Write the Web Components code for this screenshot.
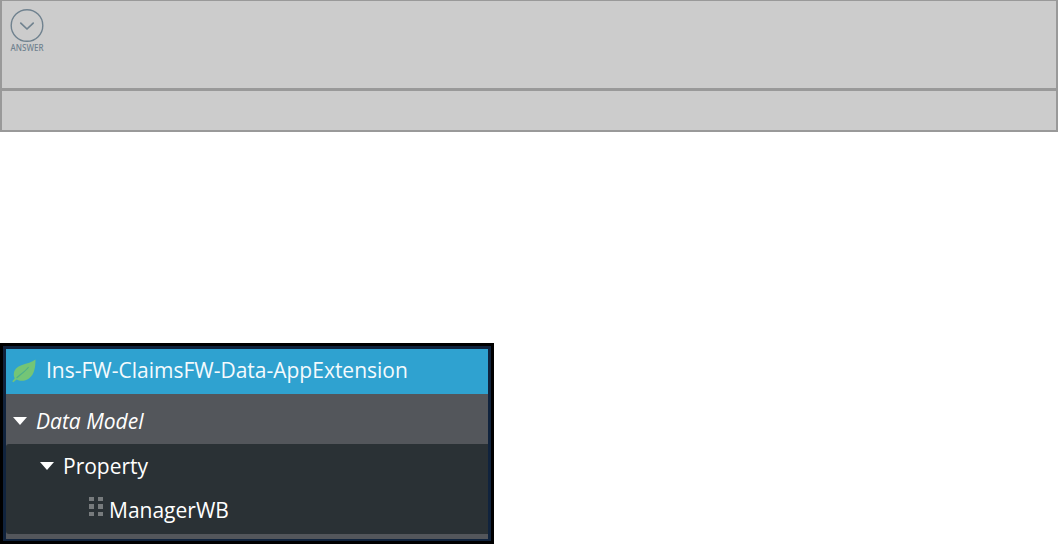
<!DOCTYPE html>
<html lang="en">
<head>
<meta charset="utf-8">
<title>Application explorer</title>
<style>
  body { margin: 0; background: #fff; font-family: "Open Sans", "Noto Sans", sans-serif; }
</style>
</head>
<body>
<app-page></app-page>

<script>
const define = (name, html) => {
  const template = document.createElement('template');
  template.innerHTML = html;
  customElements.define(name, class extends HTMLElement {
    constructor() {
      super();
      this.attachShadow({ mode: 'open' }).append(template.content.cloneNode(true));
    }
  });
};

define('answer-button', `
  <style>
    :host { display: block; }
    button { display: flex; flex-direction: column; align-items: center; padding: 0; border: 0;
      background: none; color: #70828f; font: 500 8px/12px "Noto Sans", sans-serif; }
    svg { display: block; }
  </style>
  <button type="button">
    <svg width="34" height="34" viewBox="0 0 34 34" fill="none" stroke="currentColor" stroke-width="1.4" aria-hidden="true">
      <circle cx="17" cy="17.500" r="15.8"/>
      <path d="M10.800 15.200l6.200 5.800 6.200-5.800" stroke-width="1.7" stroke-linecap="round" stroke-linejoin="round"/>
    </svg>
    <span><slot></slot></span>
  </button>`);

define('answer-box', `
  <style>
    :host { display: block; border: 2px solid #999; border-top-width: 1px; background: #ccc; }
    .main { display: flex; min-height: 80px; padding: 7px 0 0 8px; border-bottom: 3px solid #999; }
    .foot { height: 39px; }
  </style>
  <div class="main"><slot></slot></div>
  <div class="foot"></div>`);

define('leaf-icon', `
  <style>:host { display: block; } svg { display: block; }</style>
  <svg width="24" height="24" viewBox="0 0 24 24" aria-hidden="true">
    <path fill="#74c576" d="M23.5 0.5C20 3 15 4.500 10 6C5 7.500 2 11 1.800 15C1.700 16.800 2 18 2.700 19.200C1.800 20.500 1 21.300 0.500 22C0.300 23 1.200 23.500 2 22.800L4.500 20.600C8 22.300 13 22.500 17 19.500C22.500 15.500 23.500 8 23.500 0.500Z"/>
    <path fill="none" stroke="#4db08a" stroke-width="1.2" stroke-linecap="round" d="M5 18.500C8 15.800 13 12.500 16.200 8.500"/>
  </svg>`);

define('drag-handle', `
  <style>:host { display: block; } svg { display: block; }</style>
  <svg width="14" height="20" viewBox="0 0 14 20" fill="#777b7d" aria-hidden="true">
    <path d="M0 0h5v4H0zM9 0h5v4H9zM0 7h5v5H0zM9 7h5v5H9zM0 15h5v4H0zM9 15h5v4H9z"/>
  </svg>`);

define('tree-toggle', `
  <style>
    :host { display: block; }
    button { display: flex; align-items: center; gap: 9px; padding: 0; border: 0; background: none;
      color: inherit; font: inherit; line-height: inherit; white-space: nowrap; }
    svg { display: block; }
  </style>
  <button type="button" aria-expanded="true">
    <svg width="14" height="8" viewBox="0 0 14 8" fill="#fff" aria-hidden="true"><path d="M0 0h14L7 8z"/></svg>
    <slot></slot>
  </button>`);

define('class-panel', `
  <style>
    :host { display: block; box-sizing: border-box; max-width: 494px; padding: 3px; background: #000;
      color: #fff; font-size: 21px; line-height: 28px; }
    .frame { border: 3px solid #10233d; border-bottom-width: 2px; background: #53565b; padding-bottom: 5px; }
    header { display: flex; align-items: center; gap: 10px; height: 45px; padding-left: 6px;
      background: #2fa2d0; color: #f4fafd; }
    h1 { margin: 0; padding-bottom: 3px; font: inherit; white-space: nowrap; }
    leaf-icon { padding-bottom: 2px; }
    .group { display: flex; align-items: center; height: 50px; padding: 4px 0 0 7px; box-sizing: border-box;
      font-style: italic; }
    .items { border-radius: 3px 0 0 3px; background: #2a3135; padding-bottom: 2px; }
    .node { display: flex; align-items: center; height: 44px; padding-left: 34px; }
    .leaf { gap: 6px; padding-left: 83px; }
    drag-handle { padding-bottom: 6px; }
  </style>
  <section class="frame">
    <header><leaf-icon></leaf-icon><h1>Ins-FW-ClaimsFW-Data-AppExtension</h1></header>
    <div class="group"><tree-toggle>Data Model</tree-toggle></div>
    <div class="items">
      <div class="node"><tree-toggle>Property</tree-toggle></div>
      <div class="node leaf"><drag-handle></drag-handle><span>ManagerWB</span></div>
    </div>
  </section>`);

define('app-page', `
  <style>
    :host { display: flex; flex-direction: column; gap: 211px; }
  </style>
  <answer-box><answer-button>ANSWER</answer-button></answer-box>
  <class-panel></class-panel>`);
</script>
</body>
</html>
